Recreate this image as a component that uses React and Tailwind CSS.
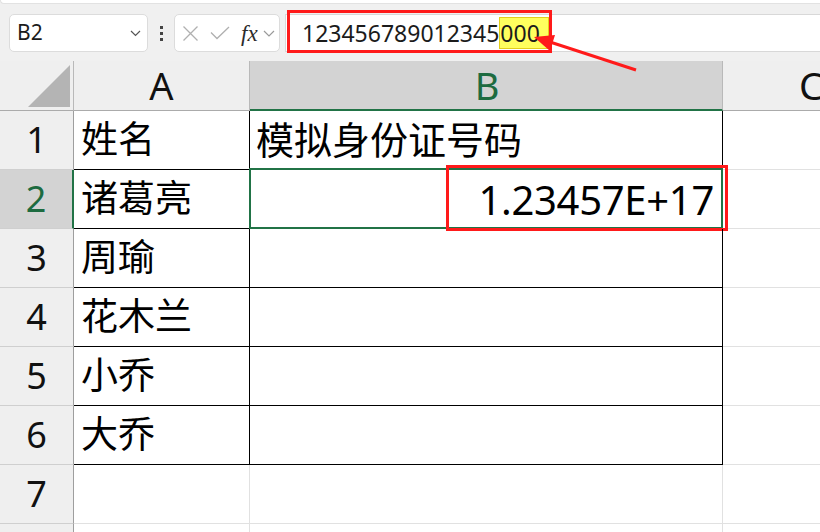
import React from 'react';

const cjk = { fontFamily: '"Noto Sans CJK SC", "Noto Sans", sans-serif' };
const ui = { fontFamily: '"Noto Sans", "Liberation Sans", sans-serif' };

const rows = [
  { n: 1, a: '姓名', b: '模拟身份证号码' },
  { n: 2, a: '诸葛亮', b: '' },
  { n: 3, a: '周瑜', b: '' },
  { n: 4, a: '花木兰', b: '' },
  { n: 5, a: '小乔', b: '' },
  { n: 6, a: '大乔', b: '' },
];

const Toolbar = () => (
  <div className="relative h-[61px] bg-[#f0f0f0] flex flex-col">
    <div className="h-[4px] bg-white rounded-bl-[8px] border-b border-l border-[#e2e2e2]" />
    <div className="flex mt-[10px] h-[38px]">
      {/* name box */}
      <div className="ml-[9px] w-[139px] shrink-0 bg-white border border-[#dcdcdc] rounded-[5px] flex items-center justify-between pl-[7px] pr-[6px]">
        <span className="text-[21px] text-[#1b1b1b]" style={ui}>B2</span>
        <svg width="11" height="7" viewBox="0 0 11 7">
          <path d="M1 1l4.5 4.5L10 1" fill="none" stroke="#555" strokeWidth="1.2" />
        </svg>
      </div>
      <div className="w-[26px] shrink-0 flex flex-col items-center justify-center gap-[3px]">
        <span className="w-[3px] h-[3px] bg-[#444]" />
        <span className="w-[3px] h-[3px] bg-[#444]" />
        <span className="w-[3px] h-[3px] bg-[#444]" />
      </div>
      {/* fx box */}
      <div className="w-[106px] shrink-0 bg-white border border-[#dcdcdc] rounded-[5px] flex items-center pl-[7px]">
        <svg width="17" height="17" viewBox="0 0 17 17">
          <path d="M1.5 1.5l14 14M15.5 1.5l-14 14" stroke="#b0b0b0" strokeWidth="1.3" />
        </svg>
        <svg className="ml-[11px]" width="20" height="14" viewBox="0 0 20 14">
          <path d="M1 6.5l6 6L19 1" fill="none" stroke="#b0b0b0" strokeWidth="1.3" />
        </svg>
        <span className="ml-[11px] text-[23px] italic text-[#2b2b2b] leading-none" style={{ fontFamily: '"Liberation Serif", serif' }}>fx</span>
        <svg className="ml-[5px]" width="12" height="7" viewBox="0 0 12 7">
          <path d="M1 1l5 5 5-5" fill="none" stroke="#9a9a9a" strokeWidth="1.2" />
        </svg>
      </div>
      {/* formula */}
      <div className="relative ml-[5px] flex-1 bg-white border-y border-l border-[#d8d8d8] flex items-center pl-[16px]">
        <span className="text-[23px] leading-[32px] text-[#1b1b1b]" style={ui}>
          {'123456789012345'}<span className="inline-block h-[32px] leading-[30px] bg-[#ffff5e] border border-[#e3cf1a] pr-[8px]">000</span>
        </span>
        <div className="absolute left-[1px] top-[-5px] w-[265px] h-[43px] border-[3px] border-[#ff1a1a]" />
      </div>
    </div>
  </div>
);

const HeaderRow = () => (
  <div className="flex h-[50px]" style={ui}>
    <div className="w-[74px] shrink-0 bg-[#efefef] border-r border-b border-r-[#b9b9b9] border-b-[#ababab] flex">
      <svg className="w-full h-full" viewBox="0 0 73 49">
        <polygon points="70,4 70,46 28,46" fill="#b4b4b4" />
      </svg>
    </div>
    <div className="w-[176px] shrink-0 bg-[#efefef] border-r border-b border-r-[#b9b9b9] border-b-[#ababab] flex items-center justify-center text-[38px] text-[#111]">A</div>
    <div className="w-[473px] shrink-0 bg-[#d3d3d3] border-r border-r-[#b9b9b9] border-b-2 border-b-[#217346] flex items-center justify-center pl-[2px] text-[38px] text-[#1d6b40]">B</div>
    <div className="flex-1 min-w-0 overflow-hidden bg-[#efefef] border-b border-[#ababab] flex items-center pl-[76px] text-[38px] text-[#111]">C</div>
  </div>
);

export default function App() {
  return (
    <div className="relative w-[820px] h-[532px] overflow-hidden bg-white">
      <Toolbar />
      <HeaderRow />
      {rows.map((r) => (
        <div key={r.n} className="flex h-[59px]">
          <div
            className={
              r.n === 2
                ? 'w-[74px] shrink-0 bg-[#d3d3d3] border-r-2 border-r-[#217346] border-b border-b-[#cfcfcf] flex items-center justify-center text-[36px] text-[#1d6b40]'
                : 'w-[74px] shrink-0 bg-[#efefef] border-r border-r-[#9e9e9e] border-b border-b-[#cfcfcf] flex items-center justify-center text-[36px] text-[#111]'
            }
            style={ui}
          >
            {r.n}
          </div>
          <div className="w-[176px] shrink-0 border-r border-b border-black flex items-center pl-[7px] pb-[5px] text-[37px] text-black" style={cjk}>
            {r.a}
          </div>
          <div className="relative w-[473px] shrink-0 border-r border-b border-black flex items-center pl-[6px] pb-[5px] text-[38px] text-black" style={cjk}>
            {r.b}
            {r.n === 2 && (
              <>
                <div className="absolute left-[-1px] top-[-2px] right-[-1px] bottom-[-1px] border-2 border-[#217346]" />
                <div className="absolute right-0 top-0 bottom-0 flex items-center pr-[8px] pt-[2px] text-[40px] tracking-[-0.3px] text-black" style={ui}>
                  1.23457E+17
                </div>
                <div className="absolute left-[196px] top-[-5px] w-[282px] h-[66px] border-[3px] border-[#ff1a1a]" />
              </>
            )}
          </div>
          <div className="flex-1 min-w-0 border-b border-[#e1e1e1]" />
        </div>
      ))}
      <div className="flex h-[59px]">
        <div className="w-[74px] shrink-0 bg-[#efefef] border-r border-r-[#9e9e9e] border-b border-b-[#cfcfcf] flex items-center justify-center text-[36px] text-[#111]" style={ui}>7</div>
        <div className="w-[176px] shrink-0 border-r border-b border-[#e1e1e1]" />
        <div className="w-[473px] shrink-0 border-r border-b border-[#e1e1e1]" />
        <div className="flex-1 min-w-0 border-b border-[#e1e1e1]" />
      </div>
      <div className="flex h-[20px]">
        <div className="w-[74px] shrink-0 bg-[#efefef] border-r border-r-[#9e9e9e]" />
        <div className="w-[176px] shrink-0 border-r border-[#e1e1e1]" />
        <div className="w-[473px] shrink-0 border-r border-[#e1e1e1]" />
      </div>
      <svg className="absolute inset-0 pointer-events-none" width="820" height="532">
        <line x1="636" y1="70" x2="550" y2="42" stroke="#ff1a1a" strokeWidth="3" />
        <polygon points="534,37 555,35 550,51" fill="#ff1a1a" />
      </svg>
    </div>
  );
}
